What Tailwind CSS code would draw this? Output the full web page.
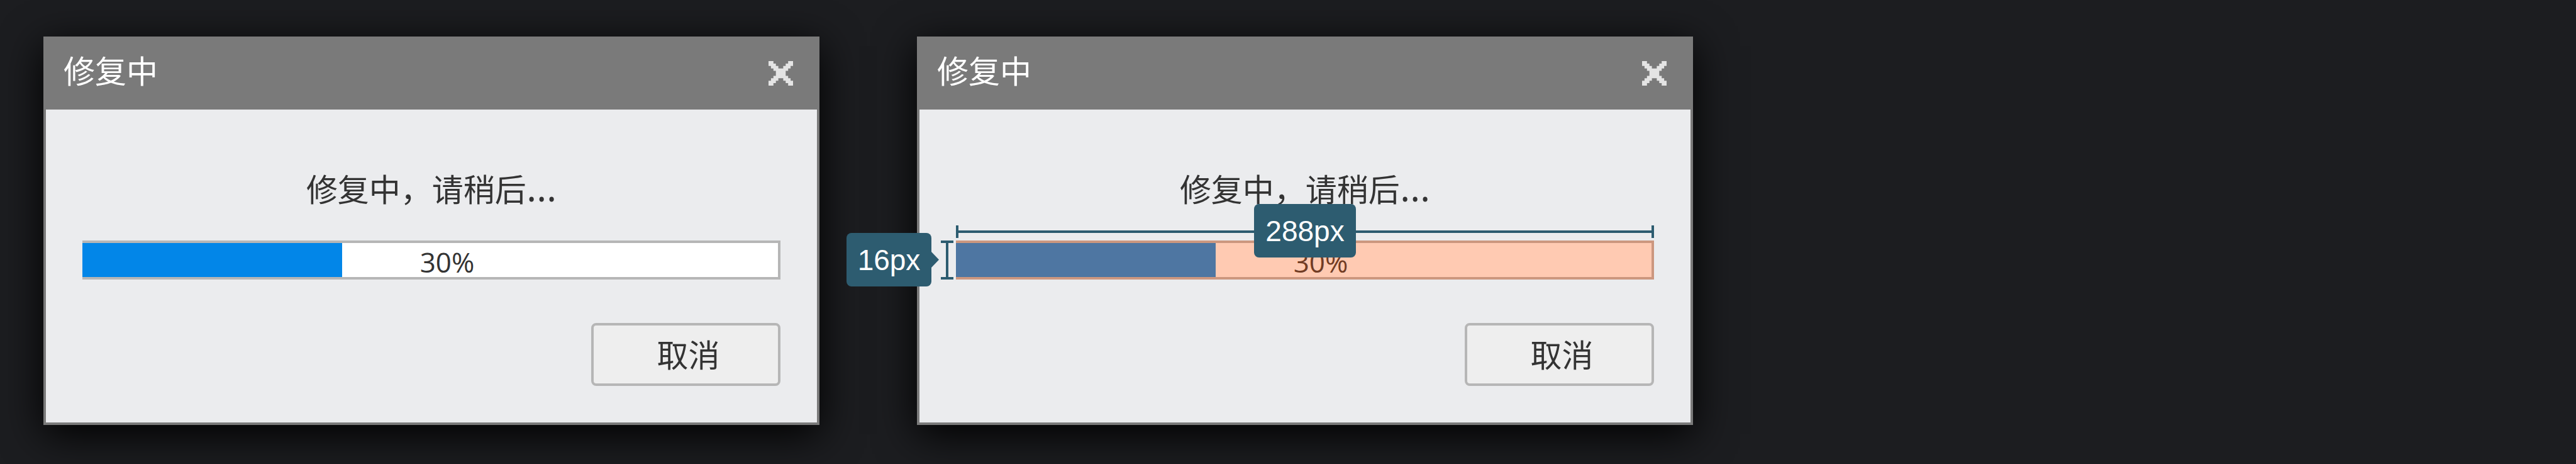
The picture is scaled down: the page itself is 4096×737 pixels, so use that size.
<!DOCTYPE html>
<html lang="zh-CN">
<head>
<meta charset="utf-8">
<meta name="viewport" content="width=device-width, initial-scale=1">
<title>修复中</title>
<script src="https://cdn.jsdelivr.net/npm/@tailwindcss/browser@4"></script>
</head>
<body class="min-h-screen bg-[#1c1d20] font-['Noto_Sans_CJK_SC',sans-serif] text-[50px] leading-[60px] text-[#333333]">
<svg class="hidden" aria-hidden="true">
  <symbol id="close" viewBox="0 0 10 10">
    <path d="M0 0H2V1H3V2H4V3H6V2H7V1H8V0H10V2H9V3H8V4H7V6H8V7H9V8H10V10H8V9H7V8H6V7H4V8H3V9H2V10H0V8H1V7H2V6H3V4H2V3H1V2H0Z" fill="currentColor"/>
  </symbol>
</svg>
<main class="flex items-start gap-[155px] overflow-hidden px-[69px] pt-[58px] pb-[62px]">

  <section aria-label="修复中" class="w-full max-w-[1234px] border-4 border-[#7a7a7a] bg-[#ebecee] shadow-[0_15px_62px_#000000]">
    <header class="flex h-28 items-center justify-between bg-[#7a7a7a] pr-[38px] pb-1 pl-7 text-white">
      <h2 class="pb-3">修复中</h2>
      <button type="button" aria-label="关闭" class="text-[#e4e4e4]"><svg class="size-[39px]"><use href="#close"/></svg></button>
    </header>
    <div class="px-[58px] pt-[94px] pb-[58px]">
      <p class="text-center">修复中，请稍后<span class="font-['Open_Sans',sans-serif] text-[62px] leading-[0px]">…</span></p>
      <div role="progressbar" aria-label="修复进度" aria-valuenow="30" aria-valuemin="0" aria-valuemax="100" class="relative mt-[54px] h-[62px] border-4 border-l-0 border-[#b6b6b6] bg-white">
        <div class="h-full bg-[#0286e8]" style="width:37.3%"></div>
        <span class="absolute inset-0 pt-[3px] pl-[54px] text-center font-['Open_Sans',sans-serif] text-[44px] leading-[54px]">30%</span>
      </div>
      <div class="mt-[69px] flex justify-end">
        <button type="button" class="h-[100px] w-[301px] rounded-lg border-4 border-[#b6b6b6] bg-[#eeeeee] pb-1 pl-2">取消</button>
      </div>
    </div>
  </section>

  <section aria-label="修复中（尺寸标注）" class="w-full max-w-[1234px] border-4 border-[#7a7a7a] bg-[#ebecee] shadow-[0_15px_62px_#000000]">
    <header class="flex h-28 items-center justify-between bg-[#7a7a7a] pr-[38px] pb-1 pl-7 text-white">
      <h2 class="pb-3">修复中</h2>
      <button type="button" aria-label="关闭" class="text-[#e4e4e4]"><svg class="size-[39px]"><use href="#close"/></svg></button>
    </header>
    <div class="px-[58px] pt-[94px] pb-[58px]">
      <p class="text-center">修复中，请稍后<span class="font-['Open_Sans',sans-serif] text-[62px] leading-[0px]">…</span></p>
      <div class="relative mt-[54px]">
        <div role="progressbar" aria-label="修复进度" aria-valuenow="30" aria-valuemin="0" aria-valuemax="100" class="relative h-[62px] border-4 border-l-0 border-[#b6b6b6] bg-white">
          <div class="h-full bg-[#0286e8]" style="width:37.3%"></div>
          <span class="absolute inset-0 pt-[3px] pl-[54px] text-center font-['Open_Sans',sans-serif] text-[44px] leading-[54px]">30%</span>
        </div>
        <div class="absolute inset-0 bg-[#ff4f00]/30"></div>

        <!-- width ruler -->
        <div class="absolute inset-x-0 bottom-full mb-1 flex h-5 items-center border-x-4 border-[#2d5c70]"><div class="h-1 w-full bg-[#2d5c70]"></div></div>
        <!-- height ruler -->
        <div class="absolute inset-y-0 right-full mr-1 flex w-5 justify-center border-y-4 border-[#2d5c70]"><div class="h-full w-1 bg-[#2d5c70]"></div></div>

        <div class="absolute -top-[58px] left-1/2 flex h-[85px] w-[162px] -translate-x-1/2 items-center justify-center rounded-lg bg-[#2d5c70] font-['Liberation_Sans',sans-serif] text-[46px] text-white">288px</div>
        <div class="absolute -top-3 right-full mr-[27px] flex items-center">
          <div class="flex h-[85px] w-[135px] items-center justify-center rounded-lg bg-[#2d5c70] font-['Liberation_Sans',sans-serif] text-[46px] text-white">16px</div>
          <svg class="h-[25px] w-3" viewBox="0 0 12 25" aria-hidden="true"><path d="M0 0L12 12.5L0 25Z" fill="#2d5c70"/></svg>
        </div>
      </div>
      <div class="mt-[69px] flex justify-end">
        <button type="button" class="h-[100px] w-[301px] rounded-lg border-4 border-[#b6b6b6] bg-[#eeeeee] pb-1 pl-2">取消</button>
      </div>
    </div>
  </section>

</main>
</body>
</html>
